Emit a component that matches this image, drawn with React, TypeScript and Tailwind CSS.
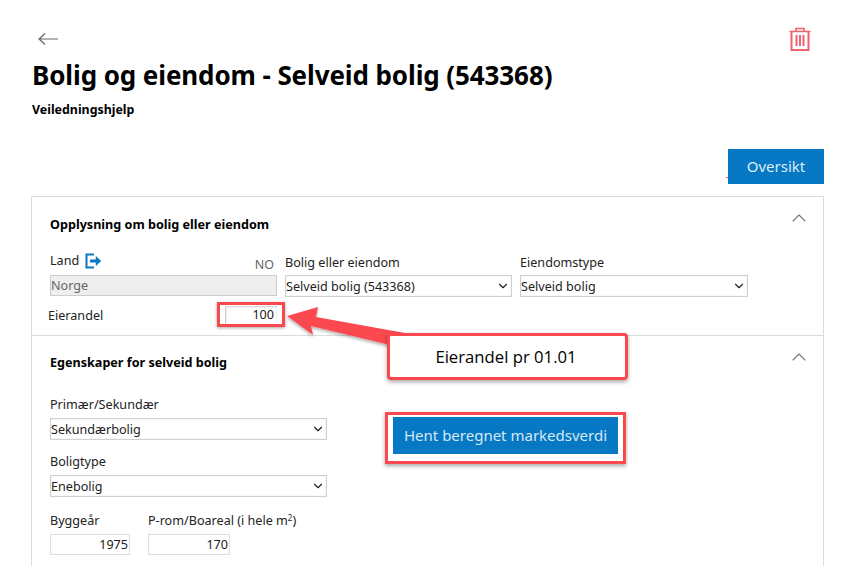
import React from 'react';
import { ChevronDown, ChevronUp } from 'lucide-react';

const field = "h-[22px] border border-[#d0d0d0] bg-white text-[12.6px] text-[#222] leading-[20px]";

const SelectBox = ({ value, className }: { value: string; className: string }) => (
  <div className={`${field} ${className} flex items-center justify-between pr-[1px] shadow-[inset_0_0_1px_#bbb]`}>
    <span className="pt-[1px]">{value}</span>
    <ChevronDown size={14} strokeWidth={2} className="text-[#222]" />
  </div>
);

const Label = ({ children, className = '' }: { children: React.ReactNode; className?: string }) => (
  <div className={`text-[12.6px] leading-[18px] text-[#222] ${className}`}>{children}</div>
);

const BackArrow = () => (
  <svg width="20" height="14" viewBox="0 0 20 14" fill="none" stroke="#666" strokeWidth="1.2" className="ml-[7px] mt-[6px]">
    <path d="M1 7h19M7 1.500 1 7l6 5.500" />
  </svg>
);

const TrashIcon = () => (
  <svg width="24" height="26" viewBox="0 0 24 26" fill="none" stroke="#f0646e" strokeWidth="1.6">
    <path d="M1.500 5.500h21M8 5.500V2.500h8v3" />
    <path d="M3.500 5.500v18.500h17V5.500" strokeWidth="2" />
    <path d="M8.500 9v11M12 9v11M15.500 9v11" strokeWidth="2" />
  </svg>
);

const ExitIcon = () => (
  <svg width="17" height="16" viewBox="0 0 17 16" fill="none" stroke="#0a78c2" strokeWidth="2">
    <path d="M9 1.500H1.500v13H9" />
    <path d="M5 8h7" strokeWidth="3" />
    <path d="M11 3.500 16 8l-5 4.500z" fill="#0a78c2" strokeWidth="0.5" />
  </svg>
);

const ArrowAnnotation = () => (
  <svg className="absolute left-0 top-0 pointer-events-none" width="854" height="566">
    <defs>
      <filter id="arrowShadow" x="-10%" y="-10%" width="120%" height="130%">
        <feDropShadow dx="0" dy="2" stdDeviation="1.5" floodColor="#000" floodOpacity="0.3" />
      </filter>
    </defs>
    <polygon points="287,316 318,307 316,317 405,333 390,345 311,326 313,335" fill="#fb4a50" filter="url(#arrowShadow)" />
  </svg>
);

export default function App() {
  return (
    <div className="relative w-[854px] h-[566px] overflow-hidden bg-white font-['Noto_Sans','Open_Sans',sans-serif] text-[#111]">
      <div className="pl-[31px] pr-[30px] h-full flex flex-col">
        <div className="h-[53px] flex items-start justify-between pt-[26px] pr-[12px]">
          <BackArrow />
          <TrashIcon />
        </div>
        <h1 className="pl-[1px] text-[26px] leading-[44px] font-bold text-black tracking-[-0.1px]">Bolig og eiendom - Selveid bolig (543368)</h1>
        <div className="pl-px mt-[3px] text-[12.4px] leading-[20px] font-bold text-black">Veiledningshjelp</div>
        <div className="mt-[29px] flex justify-end">
          <div className="w-[96px] h-[35px] bg-[#0678c4] text-[#dcecf7] text-[15px] flex items-center justify-center">Oversikt</div>
        </div>
        <div className="mt-[12px] flex-1 border border-b-0 border-[#dcdcdc]">
          <section className="h-[139px] border-b border-[#dcdcdc] relative">
            <div className="flex items-center justify-between pl-[18px] pr-[12px] pt-[18px]">
              <h2 className="text-[12.6px] leading-[20px] font-bold text-black">Opplysning om bolig eller eiendom</h2>
              <ChevronUp size={24} strokeWidth={1.1} className="text-[#777] -mt-[14px]" />
            </div>
            <div className="flex pl-[18px] mt-[15px] gap-[8px]">
              <div className="w-[227px]">
                <div className="flex items-end justify-between h-[25px] pr-[2px]">
                  <div className="flex items-center gap-[6px] pb-[5px]">
                    <Label>Land</Label>
                    <ExitIcon />
                  </div>
                  <span className="text-[12.5px] leading-[18px] text-[#666] pb-[1px] mr-[1px]">NO</span>
                </div>
                <div className="h-[21px] border border-[#ccc] bg-[#eeeeee] text-[12.6px] leading-[20px] text-[#666]">Norge</div>
              </div>
              <div className="w-[227px]">
                <Label className="h-[25px] pt-[4px]">Bolig eller eiendom</Label>
                <SelectBox value="Selveid bolig (543368)" className="w-full" />
              </div>
              <div className="w-[228px]">
                <Label className="h-[25px] pt-[4px]">Eiendomstype</Label>
                <SelectBox value="Selveid bolig" className="w-full" />
              </div>
            </div>
            <div className="flex items-center pl-[16px] mt-[9px]">
              <Label className="w-[177px]">Eierandel</Label>
              <div className="w-[52px] h-[19px] border-l border-[#ccc] shadow-[inset_0_1px_2px_#ccc] text-right pr-[3px] text-[12.6px] leading-[17px] text-[#222]">100</div>
            </div>
          </section>
          <section className="relative pl-[18px] pr-[12px] pt-[17px]">
            <div className="flex items-center justify-between">
              <h2 className="text-[12.6px] leading-[20px] font-bold text-black">Egenskaper for selveid bolig</h2>
              <ChevronUp size={24} strokeWidth={1.1} className="text-[#777] -mt-[12px]" />
            </div>
            <div className="flex mt-[23px]">
              <div className="w-[277px]">
                <Label>Primær/Sekundær</Label>
                <SelectBox value="Sekundærbolig" className="w-full mt-[4px]" />
                <Label className="mt-[13px]">Boligtype</Label>
                <SelectBox value="Enebolig" className="w-full mt-[4px]" />
                <div className="flex gap-[18px] mt-[15px]">
                  <div className="w-[80px]">
                    <Label>Byggeår</Label>
                    <div className="h-[21px] mt-[4px] border border-[#ddd] text-right pr-[1px] text-[12.6px] leading-[19px] text-[#222]">1975</div>
                  </div>
                  <div className="w-[82px]">
                    <Label className="whitespace-nowrap">P-rom/Boareal (i hele m<sup className="text-[8px]">2</sup>)</Label>
                    <div className="h-[21px] mt-[4px] border border-[#ddd] text-right pr-[1px] text-[12.6px] leading-[19px] text-[#222]">170</div>
                  </div>
                </div>
              </div>
            </div>
          </section>
        </div>
      </div>

      {/* annotations on top of the screenshot */}
      <div className="absolute left-[726px] top-[177px] w-[2px] h-px bg-[#f0646e]" />
      <div className="absolute left-[217px] top-[302px] w-[68px] h-[25px] border-[3px] border-[#f9484e] shadow-[0_1px_3px_rgba(0,0,0,0.35)]" />
      <ArrowAnnotation />
      <div className="absolute left-[387px] top-[333px] w-[241px] h-[47px] rounded-[4px] border-[3px] border-[#f9484e] bg-white shadow-[0_2px_4px_rgba(0,0,0,0.35)] flex items-center justify-center pr-[3px] text-[16.700px] text-black font-['Open_Sans',sans-serif]">Eierandel pr 01.01</div>
      <div className="absolute left-[385px] top-[412px] w-[241px] h-[52px] border-[3px] border-[#f9484e] bg-white shadow-[0_2px_4px_rgba(0,0,0,0.35)] flex items-start justify-center pt-[2px]">
        <div className="w-[225px] h-[37px] bg-[#0678c4] text-[#d5e8f5] text-[15px] flex items-center justify-center">Hent beregnet markedsverdi</div>
      </div>
    </div>
  );
}
